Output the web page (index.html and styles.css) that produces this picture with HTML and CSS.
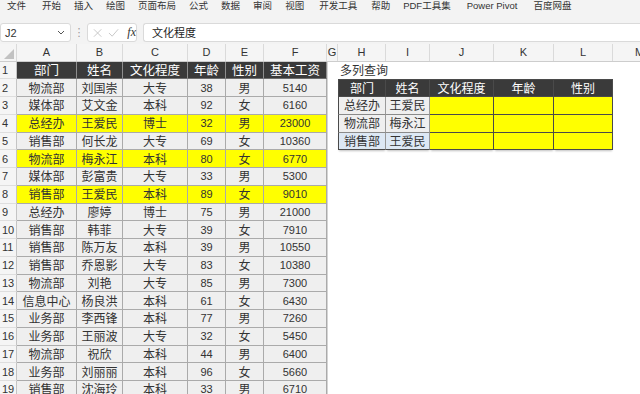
FILE: index.html
```html
<!DOCTYPE html>
<html lang="zh">
<head>
<meta charset="utf-8">
<title>多列查询</title>
<link rel="stylesheet" href="styles.css">
</head>
<body>
<div class="menu">
  <span>文件</span><span class="m4">开始</span><span>插入</span><span>绘图</span><span>页面布局</span><span>公式</span><span>数据</span><span>审阅</span><span>视图</span><span class="m2">开发工具</span><span class="m1">帮助</span><span>PDF工具集</span><span class="m4">Power Pivot</span><span class="m4">百度网盘</span>
</div>
<div class="fbar">
  <div class="namebox"><span>J2</span><svg width="8" height="5" viewBox="0 0 8 5"><path d="M1 1l3 3 3-3" stroke="#555" stroke-width="1" fill="none"/></svg></div>
  <div class="dots">⋮</div>
  <div class="fxbox">
    <svg width="10" height="10" viewBox="0 0 10 10"><path d="M1 1l8 8M9 1l-8 8" stroke="#c4c4c4" stroke-width="1"/></svg>
    <svg width="12" height="9" viewBox="0 0 12 9"><path d="M1 5l3.5 3.5L11 1" stroke="#c4c4c4" stroke-width="1" fill="none"/></svg>
    <span class="fx">fx</span>
  </div>
  <div class="input">文化程度</div>
</div>
<div class="sheet">
  <div class="colhdr">
    <div class="corner"><svg width="10" height="10" viewBox="0 0 10 10"><path d="M10 0V10H0Z" fill="#c2c2c2"/></svg></div>
    <div>A</div><div>B</div><div>C</div><div>D</div><div>E</div><div>F</div><div>G</div><div>H</div><div>I</div><div>J</div><div>K</div><div>L</div><div class="cut">M</div>
  </div>
  <div class="row"><div class="rh">1</div><div class="hd">部门</div><div class="hd">姓名</div><div class="hd">文化程度</div><div class="hd">年龄</div><div class="hd">性别</div><div class="hd f">基本工资</div><div></div><div class="title">多列查询</div></div>
  <div class="row"><div class="rh">2</div><div class="c">物流部</div><div class="c">刘国崇</div><div class="c">大专</div><div class="c n">38</div><div class="c">男</div><div class="c n f">5140</div><div></div><div class="t hd l tp">部门</div><div class="t hd tp">姓名</div><div class="t hd tp">文化程度</div><div class="t hd tp">年龄</div><div class="t hd tp">性别</div></div>
  <div class="row"><div class="rh">3</div><div class="c">媒体部</div><div class="c">艾文金</div><div class="c">本科</div><div class="c n">92</div><div class="c">女</div><div class="c n f">6160</div><div></div><div class="t g l">总经办</div><div class="t g">王爱民</div><div class="t y"></div><div class="t y"></div><div class="t y"></div></div>
  <div class="row"><div class="rh">4</div><div class="c y">总经办</div><div class="c y">王爱民</div><div class="c y">博士</div><div class="c y n">32</div><div class="c y">男</div><div class="c y n f">23000</div><div></div><div class="t g l">物流部</div><div class="t g">梅永江</div><div class="t y"></div><div class="t y"></div><div class="t y"></div></div>
  <div class="row"><div class="rh">5</div><div class="c">销售部</div><div class="c">何长龙</div><div class="c">大专</div><div class="c n">69</div><div class="c">女</div><div class="c n f">10360</div><div></div><div class="t b l s">销售部</div><div class="t b s">王爱民</div><div class="t y s"></div><div class="t y s"></div><div class="t y s"></div></div>
  <div class="row"><div class="rh">6</div><div class="c y">物流部</div><div class="c y">梅永江</div><div class="c y">本科</div><div class="c y n">80</div><div class="c y">女</div><div class="c y n f">6770</div></div>
  <div class="row"><div class="rh">7</div><div class="c">媒体部</div><div class="c">彭富贵</div><div class="c">大专</div><div class="c n">33</div><div class="c">男</div><div class="c n f">5300</div></div>
  <div class="row"><div class="rh">8</div><div class="c y">销售部</div><div class="c y">王爱民</div><div class="c y">本科</div><div class="c y n">89</div><div class="c y">女</div><div class="c y n f">9010</div></div>
  <div class="row"><div class="rh">9</div><div class="c">总经办</div><div class="c">廖婷</div><div class="c">博士</div><div class="c n">75</div><div class="c">男</div><div class="c n f">21000</div></div>
  <div class="row"><div class="rh">10</div><div class="c">销售部</div><div class="c">韩菲</div><div class="c">大专</div><div class="c n">39</div><div class="c">女</div><div class="c n f">7910</div></div>
  <div class="row"><div class="rh">11</div><div class="c">销售部</div><div class="c">陈万友</div><div class="c">本科</div><div class="c n">39</div><div class="c">男</div><div class="c n f">10550</div></div>
  <div class="row"><div class="rh">12</div><div class="c">销售部</div><div class="c">乔恩影</div><div class="c">大专</div><div class="c n">83</div><div class="c">女</div><div class="c n f">10380</div></div>
  <div class="row"><div class="rh">13</div><div class="c">物流部</div><div class="c">刘艳</div><div class="c">大专</div><div class="c n">85</div><div class="c">男</div><div class="c n f">7300</div></div>
  <div class="row"><div class="rh">14</div><div class="c">信息中心</div><div class="c">杨良洪</div><div class="c">本科</div><div class="c n">61</div><div class="c">女</div><div class="c n f">6430</div></div>
  <div class="row"><div class="rh">15</div><div class="c">业务部</div><div class="c">李西锋</div><div class="c">本科</div><div class="c n">77</div><div class="c">男</div><div class="c n f">7260</div></div>
  <div class="row"><div class="rh">16</div><div class="c">业务部</div><div class="c">王丽波</div><div class="c">大专</div><div class="c n">32</div><div class="c">女</div><div class="c n f">5450</div></div>
  <div class="row"><div class="rh">17</div><div class="c">物流部</div><div class="c">祝欣</div><div class="c">本科</div><div class="c n">44</div><div class="c">男</div><div class="c n f">6400</div></div>
  <div class="row"><div class="rh">18</div><div class="c">业务部</div><div class="c">刘丽丽</div><div class="c">本科</div><div class="c n">96</div><div class="c">女</div><div class="c n f">5660</div></div>
  <div class="row"><div class="rh">19</div><div class="c">销售部</div><div class="c">沈海玲</div><div class="c">本科</div><div class="c n">33</div><div class="c">男</div><div class="c n f">6710</div></div>
</div>
</body>
</html>
```
FILE: styles.css
```css
* { box-sizing: border-box; }
html, body { margin: 0; padding: 0; }
body {
  width: 640px;
  height: 394px;
  overflow: hidden;
  background: #fff;
  font-family: "Noto Sans CJK SC", "Liberation Sans", sans-serif;
  color: #333;
}

/* ribbon tabs */
.menu {
  height: 18px;
  background: #f3f3f3;
  display: flex;
  gap: 13px;
  padding-left: 7px;
  font-family: "Liberation Sans", "Noto Sans CJK SC", sans-serif;
  font-size: 9.5px;
  line-height: 11px;
  color: #333;
  white-space: nowrap;
}
.menu .m4 { margin-left: 3px; }
.menu .m2 { margin-left: 2px; }
.menu .m1 { margin-left: 1px; }

/* formula bar */
.fbar {
  height: 26px;
  background: #f3f3f3;
  display: flex;
  align-items: flex-start;
  padding-top: 5px;
}
.namebox {
  width: 71px;
  height: 19px;
  background: #fff;
  border: 1px solid #dadada;
  border-radius: 3px;
  display: flex;
  align-items: center;
  justify-content: space-between;
  padding: 0 5px 0 4px;
  font: 11px "Liberation Sans", sans-serif;
  color: #333;
}
.dots {
  width: 16px;
  height: 19px;
  text-align: center;
  font: 11px/19px "DejaVu Sans", sans-serif;
  color: #999;
}
.fxbox {
  width: 50px;
  height: 19px;
  background: #fff;
  border: 1px solid #dadada;
  border-radius: 3px;
  display: flex;
  align-items: center;
  gap: 6px;
  padding-left: 5px;
}
.fx {
  font: italic 12px "Liberation Serif", serif;
  color: #333;
  margin-left: 2px;
}
.input {
  flex: 1;
  margin-left: 6px;
  height: 19px;
  background: #fff;
  border: 1px solid #dadada;
  border-right: none;
  border-radius: 3px 0 0 3px;
  padding-left: 8px;
  font-size: 11px;
  line-height: 17px;
  color: #222;
}

/* sheet grid */
.sheet { width: 640px; overflow: hidden; }
.colhdr, .row {
  display: grid;
  grid-template-columns: 17px 60px 46px 65px 38px 38px 63px 11px 48px 44px 64px 60px 59px 50px;
  width: 663px;
}
.colhdr {
  height: 17.5px;
  background: #f5f5f5;
  border-bottom: 1px solid #cdcdcd;
}
.colhdr > div {
  border-right: 1px solid #dadada;
  text-align: center;
  font: 11px/17px "Liberation Sans", sans-serif;
  color: #333;
}
.colhdr > .cut { text-align: left; padding-left: 22px; }
.colhdr .corner {
  display: flex;
  align-items: flex-end;
  justify-content: flex-end;
  padding: 0 2px 2px 0;
}
.row { height: 17.75px; }
.row > div {
  display: flex;
  align-items: center;
  justify-content: center;
  white-space: nowrap;
  font-size: 12px;
  line-height: 14px;
}
.row > .rh {
  justify-content: flex-start;
  padding-left: 2px;
  background: #f5f5f5;
  border-right: 1px solid #c4c4c4;
  border-bottom: 1px solid #dedede;
  font: 11px "Liberation Sans", sans-serif;
  color: #333;
}
.row > .c {
  background: #efefef;
  border-right: 1px solid #aaaaaa;
  border-bottom: 1px solid #aaaaaa;
}
.row > .c.y { background: #ffff00; }
.row > .hd {
  background: #3a3a3a;
  color: #fff;
  font-size: 12.5px;
  border-right: 1px solid #8e8e8e;
  border-bottom: 1px solid #6e6e6e;
}
.row > .n {
  font-family: "Liberation Sans", sans-serif;
  font-size: 11px;
}
.row > .f { box-shadow: 1px 0 0 #d4d4d4; }
.row > .title {
  justify-content: flex-start;
  padding-left: 2px;
  color: #333;
}

/* lookup table */
.row > .t {
  border-right: 1px solid #4a4a4a;
  border-bottom: 1px solid #4a4a4a;
}
.row > .t.l { border-left: 1px solid #4a4a4a; }
.row > .t.tp { border-top: 1px solid #4a4a4a; }
.row > .t.hd { font-size: 12px; }
.row > .t.g { background: #efefef; border-right-color: #9a9a9a; border-bottom-color: #8a8a8a; }
.row > .t.b { background: #dde8f4; border-right-color: #9a9a9a; }
.row > .t.y { background: #ffff00; }
.row > .t.s { box-shadow: 0 2px 2px -1px rgba(0, 0, 0, 0.25); }
```
